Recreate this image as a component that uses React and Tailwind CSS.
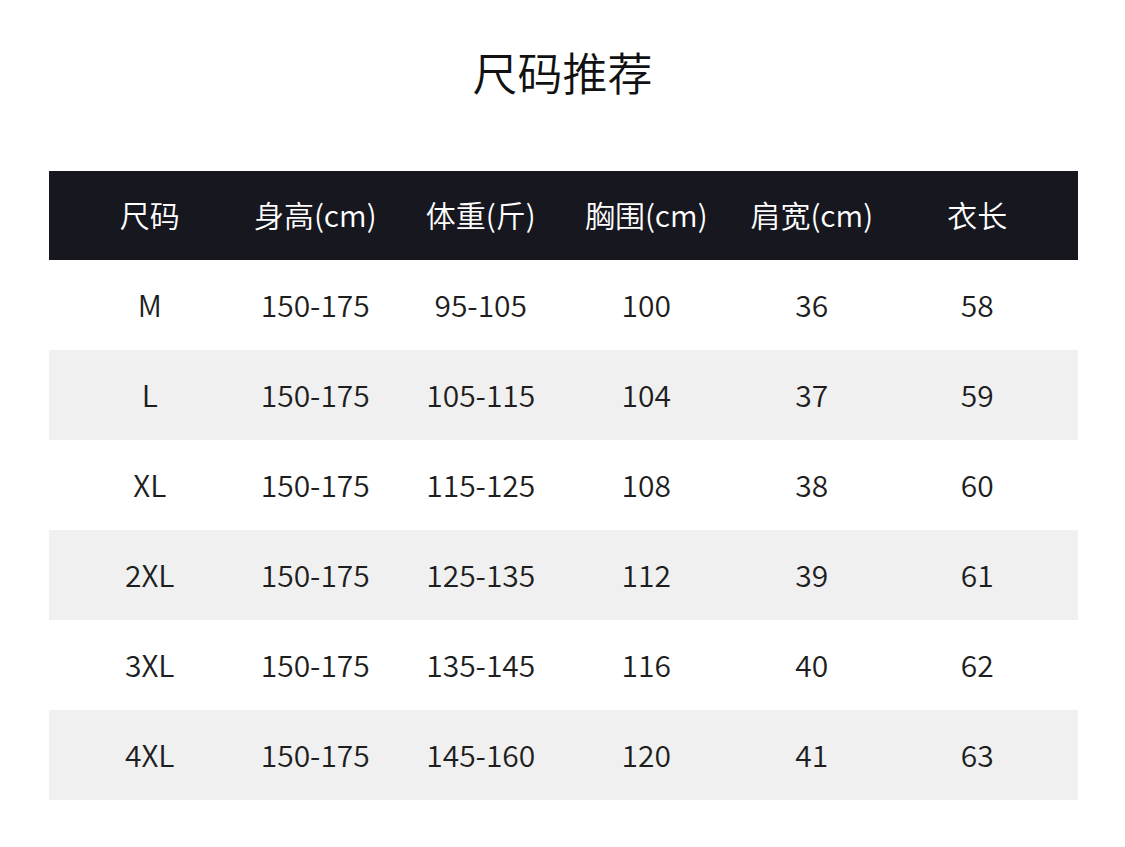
export default function App() {
  const headers = ["尺码", "身高(cm)", "体重(斤)", "胸围(cm)", "肩宽(cm)", "衣长"];
  const rows = [
    ["M", "150-175", "95-105", "100", "36", "58"],
    ["L", "150-175", "105-115", "104", "37", "59"],
    ["XL", "150-175", "115-125", "108", "38", "60"],
    ["2XL", "150-175", "125-135", "112", "39", "61"],
    ["3XL", "150-175", "135-145", "116", "40", "62"],
    ["4XL", "150-175", "145-160", "120", "41", "63"],
  ];
  return (
    <div
      className="w-[1125px] h-[847px] bg-white flex flex-col font-[350]"
      style={{ fontFamily: '"Noto Sans CJK SC", "Noto Sans", sans-serif' }}
    >
      <div className="h-[171px] flex justify-center pt-[42px]">
        <h1 className="text-[45px] leading-[60px] text-[#111]">尺码推荐</h1>
      </div>
      <div className="mx-[49px] w-[1029px]">
        <div className="h-[89px] bg-[#17171f] grid grid-cols-6 px-[18px] items-center pb-[4px]">
          {headers.map((h) => (
            <div key={h} className="text-center text-white text-[30px] leading-none">
              {h}
            </div>
          ))}
        </div>
        {rows.map((r, i) => (
          <div
            key={i}
            className={`h-[90px] grid grid-cols-6 px-[18px] items-center pb-[2px] ${i % 2 === 1 ? "bg-[#f0f0f0]" : "bg-white"}`}
          >
            {r.map((c, j) => (
              <div key={j} className="text-center text-[#1e1e1e] text-[30px] leading-none">
                {c}
              </div>
            ))}
          </div>
        ))}
      </div>
    </div>
  );
}
